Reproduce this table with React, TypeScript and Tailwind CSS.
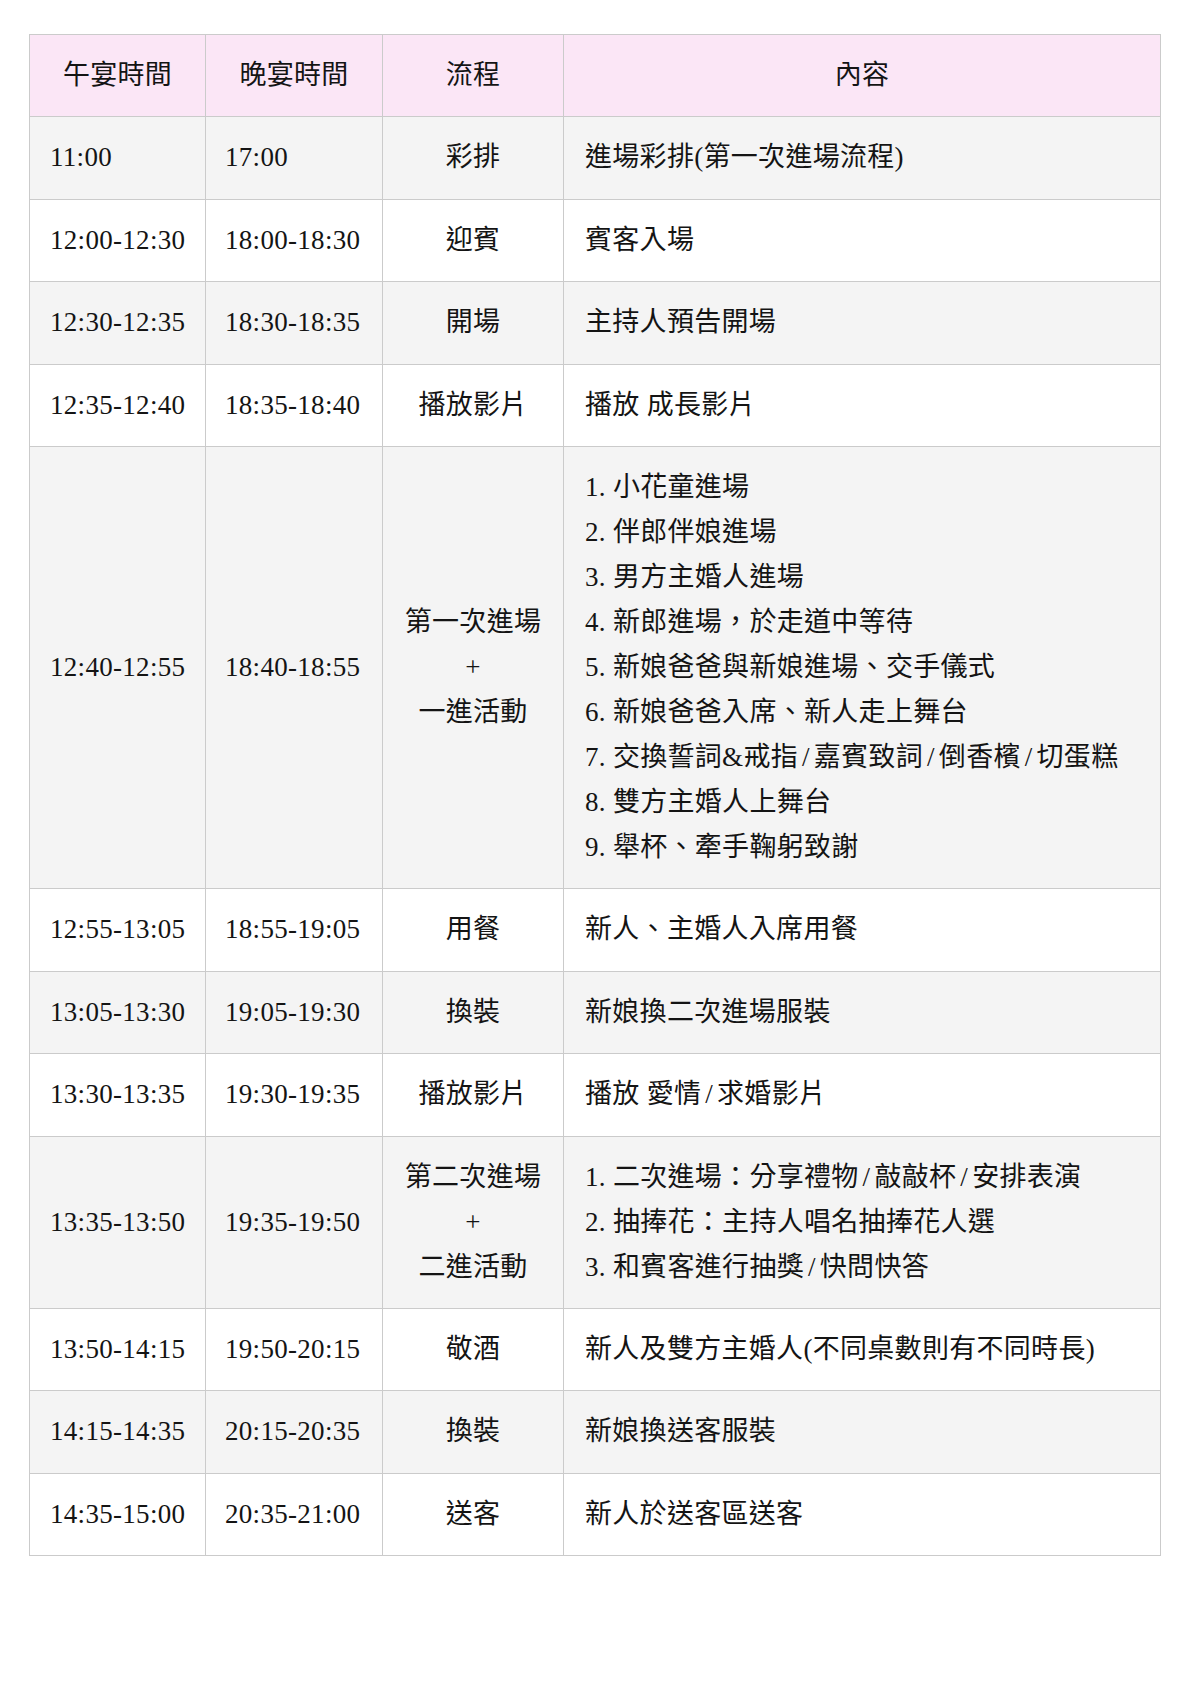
const rows: { lunch: string; dinner: string; flow: string[]; content: string[] }[] = [
  { lunch: "11:00", dinner: "17:00", flow: ["彩排"], content: ["進場彩排(第一次進場流程)"] },
  { lunch: "12:00-12:30", dinner: "18:00-18:30", flow: ["迎賓"], content: ["賓客入場"] },
  { lunch: "12:30-12:35", dinner: "18:30-18:35", flow: ["開場"], content: ["主持人預告開場"] },
  { lunch: "12:35-12:40", dinner: "18:35-18:40", flow: ["播放影片"], content: ["播放 成長影片"] },
  {
    lunch: "12:40-12:55",
    dinner: "18:40-18:55",
    flow: ["第一次進場", "+", "一進活動"],
    content: [
      "1. 小花童進場",
      "2. 伴郎伴娘進場",
      "3. 男方主婚人進場",
      "4. 新郎進場，於走道中等待",
      "5. 新娘爸爸與新娘進場、交手儀式",
      "6. 新娘爸爸入席、新人走上舞台",
      "7. 交換誓詞&戒指/嘉賓致詞/倒香檳/切蛋糕",
      "8. 雙方主婚人上舞台",
      "9. 舉杯、牽手鞠躬致謝",
    ],
  },
  { lunch: "12:55-13:05", dinner: "18:55-19:05", flow: ["用餐"], content: ["新人、主婚人入席用餐"] },
  { lunch: "13:05-13:30", dinner: "19:05-19:30", flow: ["換裝"], content: ["新娘換二次進場服裝"] },
  { lunch: "13:30-13:35", dinner: "19:30-19:35", flow: ["播放影片"], content: ["播放 愛情/求婚影片"] },
  {
    lunch: "13:35-13:50",
    dinner: "19:35-19:50",
    flow: ["第二次進場", "+", "二進活動"],
    content: ["1. 二次進場：分享禮物/敲敲杯/安排表演", "2. 抽捧花：主持人唱名抽捧花人選", "3. 和賓客進行抽獎/快問快答"],
  },
  { lunch: "13:50-14:15", dinner: "19:50-20:15", flow: ["敬酒"], content: ["新人及雙方主婚人(不同桌數則有不同時長)"] },
  { lunch: "14:15-14:35", dinner: "20:15-20:35", flow: ["換裝"], content: ["新娘換送客服裝"] },
  { lunch: "14:35-15:00", dinner: "20:35-21:00", flow: ["送客"], content: ["新人於送客區送客"] },
];

const cell = "border border-[#cbcbcb] py-[18px] leading-[45px] align-middle";

// slashes in the source sit a little apart from the characters
function Line({ text }: { text: string }) {
  const parts = text.split("/");
  return (
    <div className="whitespace-nowrap">
      {parts.map((p, i) => (
        <span key={i}>
          {i > 0 && <span className="mx-[4px]">/</span>}
          {p}
        </span>
      ))}
    </div>
  );
}

export default function App() {
  return (
    <div className="min-h-[1683px] bg-white pt-[34px] pl-[29px] text-[27px] text-[#141414] tracking-[0.3px] [font-family:'Liberation_Serif','Noto_Sans_CJK_TC',serif]">
      <table className="w-[1132px] table-fixed border-collapse">
        <colgroup>
          <col className="w-[176px]" />
          <col className="w-[177px]" />
          <col className="w-[181px]" />
          <col />
        </colgroup>
        <thead>
          <tr className="h-[81px] bg-[#fbe6f6]">
            <th className={`${cell} font-normal text-center`}>午宴時間</th>
            <th className={`${cell} font-normal text-center`}>晚宴時間</th>
            <th className={`${cell} font-normal text-center`}>流程</th>
            <th className={`${cell} font-normal text-center`}>內容</th>
          </tr>
        </thead>
        <tbody>
          {rows.map((r, i) => (
            <tr key={i} className={`h-[82.5px] ${i % 2 === 0 ? "bg-[#f4f4f4]" : "bg-white"}`}>
              <td className={`${cell} pl-[20px]`}>{r.lunch}</td>
              <td className={`${cell} pl-[19px]`}>{r.dinner}</td>
              <td className={`${cell} text-center`}>
                {r.flow.map((f) => (
                  <div key={f}>{f}</div>
                ))}
              </td>
              <td className={`${cell} pl-[21px]`}>
                {r.content.map((c) => (
                  <Line key={c} text={c} />
                ))}
              </td>
            </tr>
          ))}
        </tbody>
      </table>
    </div>
  );
}
